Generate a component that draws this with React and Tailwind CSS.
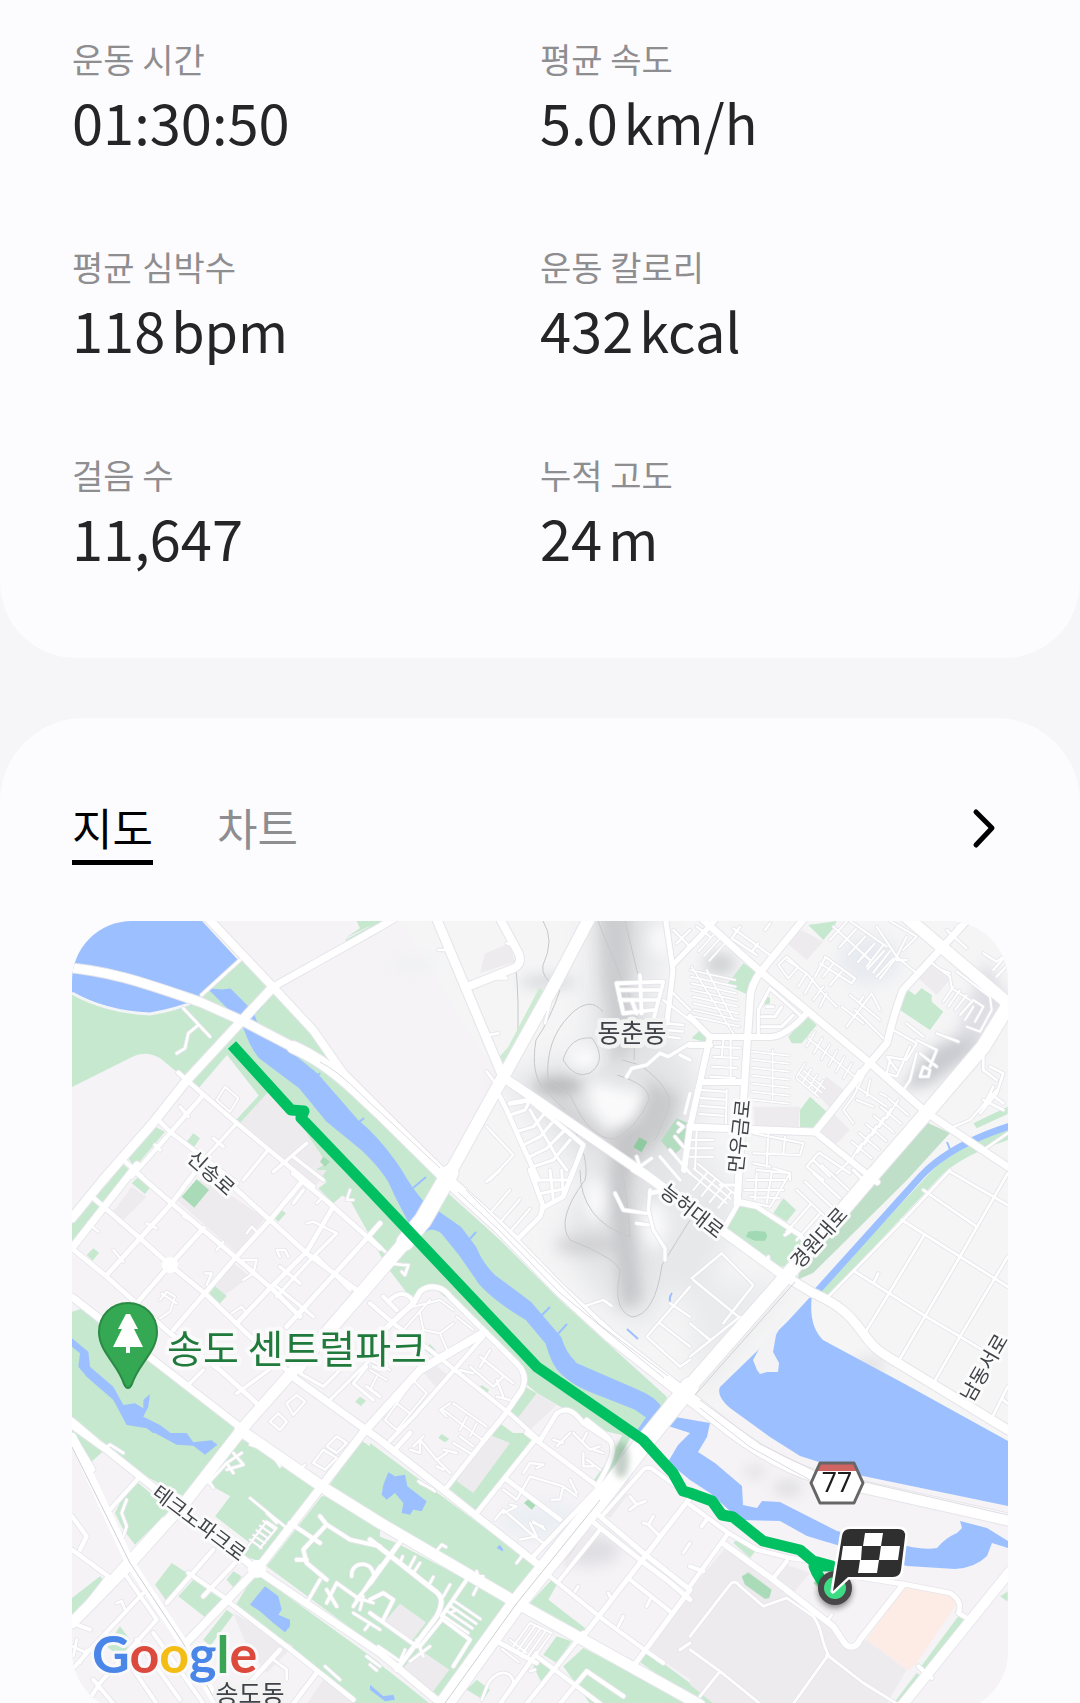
import React, { useState } from "react";

const STATS = [
  { label: "운동 시간", value: "01:30:50" },
  { label: "평균 속도", value: "5.0", unit: "km/h" },
  { label: "평균 심박수", value: "118", unit: "bpm" },
  { label: "운동 칼로리", value: "432", unit: "kcal" },
  { label: "걸음 수", value: "11,647" },
  { label: "누적 고도", value: "24", unit: "m" },
];

const TABS = [
  { id: "map", label: "지도" },
  { id: "chart", label: "차트" },
];

// n parallel segments, each (dx, dy) long and shifted by (sx, sy)
const hatch = (x, y, dx, dy, sx, sy, n) =>
  Array.from({ length: n }, (_, i) => `M${x + sx * i} ${y + sy * i}l${dx} ${dy}`).join("");

const GREEN = "#c5e8cf";
const DEEP_GREEN = "#aadbb8";
const WATER = "#9cc0ff";
const GRAY = "#eeebee";

// The map is split in sectors drawn at three times the map scale.
// roads: [stroke width, path]
const SECTORS = [
  {
    x: 60,
    y: 910,
    areas: [
      [GRAY, "M535 635 620 545 700 610 800 760 730 800z"],
      [GREEN, "M378 698 400 670 420 685 402 712zM205 745 285 650 315 665 225 772zM140 810 185 760 215 785 200 810zM800 810 840 760 890 810zM855 85 960 33 890 33 900 55zM960 33 855 90 865 96 960 50z"],
      [GREEN, "M528 630 615 536 625 545 540 638z"],
      [DEEP_GREEN, "M780 755 790 740 810 755 795 770z"],
    ],
    roads: [
      [8, "M370 295 450 380M415 345 385 370 375 415 350 430"],
      [13, "M355 488 420 545 525 635 760 830M430 555 325 675 215 800M295 630 330 665 440 750 530 820M185 745 245 800"],
      [10, "M530 640 430 750M620 725 550 810M740 700 640 785M700 740 790 810M385 620 360 590M300 720 285 705M460 685 490 710"],
      [6, "M470 570 495 530 535 565 510 605 470 570"],
      [9, "M425 255 540 150"],
    ],
  },
  {
    x: 370,
    y: 910,
    areas: [
      [GRAY, "M345 130 420 100 435 155 330 190z"],
      ["#cdebd2", "M385 445 400 460 500 320 530 250 508 233 415 410z"],
      [GREEN, "M210 50 216 50 270 160 262 160zM300 240 306 240 390 440 380 430zM0 33 60 33 0 60z"],
      ["#8fc9a0", "M790 712 808 682 832 695 815 726z"],
      ["#b3dcc0", "M873 692 920 625 955 640 950 700 910 737z"],
    ],
    roads: [
      [11, "M740 220 880 215 850 330 M740 220 760 310 850 300M745 240 875 240M750 270 865 270M810 195 815 310M785 270 800 310"],
      [10, "M770 500 785 475 830 465 870 430M870 430 895 440 960 400M930 435 960 450"],
      [8, "M350 485 380 525M355 375 385 370M205 120 225 120M370 205 410 205 395 195M410 100 425 105"],
      [14, "M390 560 410 600 450 690 505 810M420 580 480 570 640 705 600 810"],
      [9, "M480 570 465 600 420 615M480 600 560 740 590 780M440 665 490 650 520 615M460 705 510 680 545 640M480 740 530 715 580 665M490 770 550 750 600 690"],
      [7, "M350 650 430 735 360 810M295 230 350 375M525 340 540 280"],
      [9, "M915 680 940 710M925 640 940 650 925 665M800 740 810 770 845 745M870 740 930 810M900 720 960 790M945 610 960 550"],
      [7, "M910 60 960 110M920 100 960 60M880 270 960 330M900 240 960 300M890 340 940 345M890 360 940 365M890 380 930 385"],
    ],
  },
  {
    x: 690,
    y: 910,
    areas: [
      [GRAY, "M680 200 730 150 780 210 740 255zM370 540 410 500 470 545 420 595zM190 590 330 590 325 655 195 655zM380 655 430 610 480 660 430 710zM280 90 335 60 400 95 350 150z"],
      [GREEN, "M110 225 160 160 205 190 175 255zM355 45 440 33 430 55 400 90zM295 380 350 318 380 345 335 400 305 400zM330 600 360 560 410 605 370 658 330 655zM615 290 655 240 675 255 695 235 725 255 725 275 760 305 720 360zM5 385 30 360 60 380 55 400zM850 640 953 590 953 612 860 655zM222 265 240 262 240 280 225 285z"],
    ],
    roads: [
      [5, hatch(0, 180, 135, 30, 2, 20, 8) + "M5 170 130 370M50 180 130 330"],
      [5, hatch(10, 110, 45, -50, 16, 14, 4)],
      [5, hatch(375, 365, -25, 45, 22, 19, 7) + "M355 385 500 505"],
      [5, hatch(185, 425, 112, 12, 0, 24, 7) + "M248 420 248 570"],
      [5, hatch(345, 460, -25, 40, 18, 17, 4) + hatch(320, 505, 65, 55, 10, -12, 3)],
      [6, hatch(75, 410, 75, 4, -5, 30, 4) + "M122 390 122 520M100 390 95 440"],
      [6, hatch(35, 540, 72, 5, -2, 24, 4) + "M110 540 108 640"],
      [6, "M190 670 340 700 330 735 190 730M235 670 230 770M285 680 280 730M0 690 70 690M0 715 70 715M0 740 70 740M20 665 15 780M190 760 240 770M250 775 300 790 300 810"],
      [6, "M265 165 290 140 325 170 295 205zM290 150 350 190 400 250 440 290M325 230 350 190M345 250 370 205M370 270 400 230M390 290 410 250"],
      [6, "M405 140 495 205 485 220 390 160M375 200 405 145M400 200 430 160M420 225 455 185"],
      [6, hatch(420, 90, 50, -55, 28, 22, 6) + "M430 50 540 150M480 33 590 110"],
      [6, hatch(530, 170, 50, -65, 20, 18, 3) + "M560 50 620 140 650 80M600 33 680 80 640 120M620 140 680 190"],
      [7, "M150 50 125 85 200 135M130 55 240 135M185 125 205 100M20 50 60 80M225 60 240 40"],
      [9, "M205 380 205 300 240 235 335 320M215 320 255 320 275 290M215 350 275 350 310 315M230 290 250 290"],
      [6, "M455 290 520 340M480 255 570 330M470 350 545 250 570 300M495 300 580 385M510 275 520 260"],
      [6, "M720 155 780 200 785 235 840 270M800 185 900 260 905 300 870 365 830 350M760 275 790 230M775 290 810 240M795 300 830 255M810 315 850 270 880 290 855 335M825 330 850 290"],
      [7, "M610 360 680 400 650 450 590 440 620 480M650 340 700 380M680 390 740 420 720 470M680 430 660 510 640 540M700 470 690 500 715 500 720 480zM740 370 805 395M690 430 740 470M600 450 590 490 620 500 660 410"],
      [6, "M520 500 490 560 460 600 490 640M500 530 590 590M540 510 530 560M570 550 590 560M550 590 500 570"],
      [6, hatch(625, 570, -35, 55, -22, 26, 6) + hatch(655, 615, -60, -50, -22, 26, 6)],
      [7, "M770 60 830 115M800 50 830 33M880 130 920 155 953 130M910 180 945 140M920 200 953 165M755 180 780 190M620 150 650 150"],
      [8, "M880 440 880 480 920 510M900 470 940 490 920 550 870 610M880 570 940 600M900 550 940 580M910 530 880 590"],
      [7, "M780 655 840 630 920 540M880 720 953 670"],
      [7, "M385 730 350 770 400 810M370 750 420 800M390 730 480 790M440 790 480 750"],
    ],
  },
  {
    x: 60,
    y: 1170,
    areas: [
      [GRAY, "M350 90 430 20 615 145 530 250zM160 125 215 50 260 80 190 150zM465 345 520 280 570 320 495 375zM700 0 800 0 770 45z"],
      [GREEN, "M105 80 180 0 215 10 130 115zM36 155 90 90 125 115 36 215zM215 40 235 20 272 50 255 72zM640 140 658 115 678 130 655 155zM80 255 100 235 117 248 98 272zM445 375 465 348 500 378 478 403zM885 695 900 680 918 692 903 708zM775 55 850 0 890 40 820 100z"],
      [DEEP_GREEN, "M365 80 410 28 447 60 403 113z"],
      [GREEN, "M36 425 70 415 290 580 525 770 515 812 36 812z"],
      [WATER, "M36 505 85 545 90 590 160 650 190 705 225 700 250 715 250 690 270 672 265 710 250 740 300 765 340 795 375 812 310 812 260 775 200 765 160 690 80 620 55 590 60 550 36 530z"],
    ],
    roads: [
      [14, "M220 0 335 100 530 265 640 360 720 440M90 75 240 205 330 285 440 375 560 490 690 610M36 235 140 320 330 490 480 600 590 700M520 50 630 150 740 250 890 360M700 10 820 110 960 235"],
      [14, "M410 0 335 100 240 205 140 315M730 30 630 150 525 265 430 375 340 480M430 175 330 285 230 400M820 110 740 245 625 360 530 460M960 160 880 250 780 360 680 470"],
      [10, "M650 350 760 440M830 190 760 260 650 380M640 590 530 670M430 600 380 650M660 290 720 340M790 350 720 430M730 60 700 100M770 260 870 360"],
      [7, "M370 140 390 150M260 160 290 175M160 240 190 275M85 160 115 185M470 240 490 215M560 190 575 170 590 185M550 270 590 270 580 310 550 330M660 260 650 240 675 240 685 260M435 310 455 310 440 345"],
      [6, "M300 390 320 365 345 380 330 425 300 445M305 370 350 400M515 430 545 410 560 430 590 400"],
      [14, "M36 750 110 812"],
      [9, "M735 590 720 610 790 650 840 600M920 590 880 640 940 690M810 690 940 560M940 590 960 600M920 650 960 680"],
      [7, "M680 700 710 675 735 695 700 735zM630 755 655 730 680 755 660 780zM740 160 760 155 830 190M770 100 790 80M870 60 860 90 880 90"],
    ],
  },
  {
    x: 370,
    y: 1170,
    areas: [
      [GRAY, "M440 745 500 670 560 705 470 790zM145 590 165 560 240 620 205 660z"],
      [GREEN, "M165 540 180 522 197 540 182 555zM320 660 335 645 358 660 342 678zM370 780 390 760 460 812 370 812zM420 720 465 650 500 670 440 748z"],
    ],
    roads: [
      [14, "M480 0 520 110 510 140 440 210M515 115 580 80 610 0M790 0 890 60 840 70"],
      [9, "M505 30 600 30M515 70 590 55M540 0 550 90M575 0 580 80M350 35 390 0"],
      [7, hatch(355, 135, 65, -75, 30, 28, 3) + "M320 90 440 200"],
      [7, "M640 410 700 390 725 408M830 500 960 350M830 500 930 590 960 570M870 460 960 530M900 400 960 440"],
      [10, "M735 70 760 120 830 130M840 60 835 120 850 180 885 235 885 270M800 160 835 165"],
      [8, "M60 280 100 285 115 285 105 315 95 305M0 200 45 245"],
      [16, "M0 520 130 400 150 365C180 340 220 350 240 380L440 580C470 610 465 640 455 660L400 740 340 812"],
      [12, "M0 400 70 460 180 540 430 740 510 812M60 390C90 360 120 370 130 400"],
      [12, "M340 500 130 740 60 812M40 380 80 420"],
      [6, "M130 410 210 390 250 420M100 480 180 390M150 430 160 480 210 490 250 460 M210 490 240 560M260 440 310 480M90 470 150 520"],
      [7, "M300 590 370 650 400 620M330 560 380 600 430 640M360 540 330 590M380 680 420 690M270 600 310 610M380 630 400 680"],
      [6, "M45 750 130 630 170 670 80 780zM80 700 120 730M220 720 340 812M250 700 350 770M230 740 210 720 240 700M290 740 270 780M320 760 300 800M0 600 50 630M20 620 0 660M0 570 60 600"],
      [14, "M510 812 560 730C590 710 610 720 640 760L720 812M650 750 700 790"],
    ],
  },
  {
    x: 690,
    y: 1170,
    areas: [
      [GREEN, "M145 105 210 115 345 210 300 290 270 290 105 175z"],
      [GREEN, "M250 130 280 85 318 120 290 155z"],
      ["#a0d9b3", "M175 185 195 182 225 185 232 198 225 212 195 212 168 200z"],
    ],
    roads: [
      [8, "M495 305 700 435 810 500 910 560M635 150 810 260 953 350M700 60 860 170M780 5 953 105M700 200 530 480M953 10 810 260 625 575M953 260 810 500 730 640M953 650 905 745M415 380 640 150 780 0M550 340 565 310M940 690 953 700"],
      [7, "M5 325 95 250 190 345 100 460M145 440 10 330M0 560 150 440M0 460 60 510"],
      [14, "M150 100 200 110 330 195 345 215M105 170 145 100"],
      [7, hatch(320, 60, 80, 75, 25, -25, 4) + hatch(290, 185, 70, -80, 30, 25, 3)],
      [6, "M150 10 150 90 240 110 300 10 200 0M170 30 290 30M165 60 280 60M200 10 195 90M245 10 230 100M180 80 270 85"],
      [6, hatch(0, 10, 110, 90, 12, -14, 3) + hatch(10, 60, 40, -50, 25, 18, 4)],
      [9, "M90 45 145 45M285 195 300 185M490 0 540 50M235 260 235 275"],
    ],
  },
  {
    x: 60,
    y: 1433,
    areas: [
      [GREEN, "M36 0 515 0 370 190 240 120 140 45 85 95z"],
      [WATER, "M285 0 350 35 400 38 435 65 472 35 455 22 400 28 380 0z"],
      [GREEN, "M540 20 600 30 770 160 680 275 600 385 550 370 570 330 465 250 510 190 440 150zM900 20 960 60 960 255 800 170z"],
      [GREEN, "M190 190 235 150 330 230 225 335 190 290 165 240zM335 390 390 425 320 505 285 455zM400 440 500 510 445 560 355 490zM500 440 520 415 545 430 522 465zM36 495 120 430 135 445 36 545zM430 620 500 530 520 545 450 640z"],
      [GREEN, "M580 430 600 430 960 690 960 812 880 812 525 520zM785 190 840 190 960 290 960 650 620 400z"],
      ["#f6f3f7", "M410 185 440 155 510 190 465 250 410 225z"],
      [GRAY, "M520 540 700 640 620 720 560 640zM740 812 790 740 880 812z"],
      [WATER, "M570 515 590 490 615 460 655 490 665 530 655 545 690 560 690 580 675 598 640 570 600 535z"],
      [GREEN, "M140 640 180 580 210 620 190 680z"],
    ],
    roads: [
      [13, "M240 130 150 230M40 10 100 110M310 260 210 370 60 540M460 350 320 510M530 385 430 490M385 420 510 505M36 350 145 430 36 570M36 250 80 310 60 350"],
      [12, "M250 480 90 650 36 710M290 560 120 750 80 812M200 430 290 560M200 680 290 812M280 600 430 812M100 740 160 812M36 570 90 590M230 620 360 800"],
      [14, "M510 510 680 640 880 800M660 650 560 760M770 720 700 812"],
      [8, "M200 200 185 240 200 280 190 310M130 50 150 35 190 60M170 510 185 505 195 530M36 640 80 660M50 620 40 670M60 690 80 650"],
      [12, "M690 270 780 330M780 250 800 275 730 350 740 390 800 440M800 275 870 320 960 340M710 380 740 380"],
      [10, "M875 430C870 380 950 380 940 440L890 500M780 440 740 510M800 510 830 450 900 500M960 400 880 520M800 470 830 520"],
      [7, "M570 195 680 285M620 240 650 270 M760 90 790 50 830 75 795 110zM800 40 830 10 860 30 830 60zM570 35 600 45M640 70 660 100M720 110 735 95"],
      [8, "M445 150 500 90 545 60M500 90 520 120M520 60 550 95 500 110M450 150 460 165"],
      [5, hatch(570, 320, 35, 25, 10, -14, 5) + "M560 345 620 265 650 285M600 345 650 285"],
      [8, "M795 700 840 740M910 490 900 530M910 500 940 510M880 540 960 590M930 570 915 590M920 670 960 700M640 680 680 710 680 740"],
    ],
  },
  {
    x: 370,
    y: 1433,
    areas: [
      [GREEN, "M0 30 500 400 430 510 0 260zM235 165 370 0 490 0 500 10 320 235z"],
      [GRAY, "M260 145 345 0 420 30 310 180z"],
      [GREEN, "M0 300 80 330 440 520 200 800 190 790 0 650zM0 670 180 812 0 812z"],
      [GRAY, "M45 565 90 512 168 568 120 630zM85 720 150 650 238 710 180 788zM960 480 960 740 830 650zM580 400 650 290 680 290 610 400zM690 240 780 130 770 190 720 255z"],
      [GREEN, "M480 510 545 440 560 455 535 500 645 585 640 605zM520 665 560 610 605 625 560 690zM800 680 830 655 960 750 960 795zM580 700 640 645 960 812 660 812zM290 770 320 740 360 770 340 800zM490 700 515 670 550 700 515 750zM665 150 730 60 760 0 790 0 700 155zM205 15 215 3 238 18 225 28z"],
      [DEEP_GREEN, "M462 210 475 198 498 215 485 230z"],
      [WATER, "M55 118 75 130 105 125 112 160 170 205 155 235 130 230 120 245 95 240 100 210 75 180 50 200 35 185 40 155zM380 345 390 335 400 350 397 355zM0 755 40 790 70 785 75 800 45 805 0 770z"],
    ],
    roads: [
      [14, "M470 0 690 165M410 140 570 260M500 15 320 240M225 170 360 0M75 50 120 0M490 370 690 160"],
      [12, "M540 430 700 560 830 655 880 690M570 440 690 290M780 440 900 535M700 245 820 110C830 100 845 105 850 110L960 190"],
      [15, "M690 250 820 360 960 470M660 260 810 380 890 440 960 500M960 195 640 610M960 470 790 700"],
      [14, "M700 0C740 30 740 60 680 160M0 320 190 470C220 490 220 510 200 550L80 710M95 320 0 450"],
      [11, "M290 440 215 550M220 560 300 620 250 700M0 540 140 640M150 640 215 560M0 500 40 480 70 500 40 560"],
      [7, hatch(215, 545, 80, 55, 12, -14, 4) + "M240 540 260 530"],
      [13, "M500 660 390 812M640 600 470 812M500 670 690 812M650 715 760 790M650 715 570 812M390 630 500 690"],
      [8, "M335 800 355 750C390 700 430 720 430 750L400 800M480 715 495 710"],
      [6, hatch(480, 570, -50, 70, 15, 9, 5) + hatch(420, 620, 50, 40, -12, 14, 3) + "M480 570 545 600"],
      [8, "M90 390 98 370M115 410 135 372M130 420 150 390M180 450 190 432M220 490 240 455M195 360 215 335 228 342M440 390 455 370M320 415 325 430 340 430M310 485 320 465M25 640 90 685 105 650M120 685 180 640M140 620 160 670M0 695 20 712"],
      [7, "M460 120 480 90 520 95 500 105M480 130 580 160 620 190M480 130 440 200 400 170M545 200 570 200 580 160M600 140 620 180M420 215 440 220M400 230 375 260M400 230 480 300 520 330M440 220 400 240M490 270 520 280M450 320 500 310 480 270M490 265 525 290"],
      [7, "M120 50 150 60 150 20 200 80 230 60M130 40 160 10M200 80 240 120M220 50 260 60M200 100 220 110M250 30 300 60M270 10 310 40M150 150 190 170M145 145 195 175"],
      [7, "M560 40 600 0M550 20 580 30M610 0 660 50 690 40M640 60 640 100 670 100M650 80 690 110M670 50 700 60M640 20 650 0"],
      [9, "M780 190 800 215 780 230M800 215 825 205M850 250 835 275 820 270M835 275 870 310M960 330 940 360M720 490 715 480M830 520 840 500M745 580 760 550M615 475 625 460M930 650 960 630"],
    ],
  },
  {
    x: 690,
    y: 1433,
    areas: [
      [GRAY, "M110 340 250 435 290 395 360 420 310 480 430 580 480 640 530 620 650 710 590 812 0 812 0 470z"],
      ["#fdebe6", "M640 458 780 485 802 510 680 690 655 712 530 620z"],
      [GREEN, "M130 330 145 315 195 355 180 375zM690 705 810 543 833 560 715 720zM610 812 680 720 700 735 645 812zM0 755 70 812 0 812zM930 490 953 475 953 505z"],
      [DEEP_GREEN, "M155 430 175 418 245 470 238 495 225 498 165 455zM370 450 380 440 395 455 385 465z"],
      ["#f6f3f7", "M0 370 0 470 105 340 40 290z"],
    ],
    roads: [
      [13, "M0 215 115 300 200 350 300 375 380 385M115 300 0 460M290 385 250 435"],
      [18, "M105 335 250 440 430 580 460 625C475 650 500 645 510 620L640 455"],
      [14, "M490 430 650 455 780 480C810 500 815 520 805 540L840 560"],
      [8, "M0 610 120 455C130 440 145 450 150 460L220 520 290 495 370 550C400 590 390 620 415 665L310 812M410 665 520 750 620 812M0 650 90 715 210 812M90 715 30 790M415 560 425 545"],
      [12, "M685 700 725 735M0 400 40 415"],
      [12, "M35 280 50 260"],
      [30, "M960 415 630 825"],
    ],
  },
];

// Main streets in map coordinates
const MAIN_ROADS = [
  [8, "M205 915 273 987 313 1030 343 1073 380 1110"],
  [7, "M273 987 380 927 400 915"],
  [9, "M273 987 187 1080 153 1123 103 1180 72 1218"],
  [7, "M137 1165 72 1248"],
  [12, "M591 915 557 980 503 1077 450 1173"],
  [17, "M450 1173 423 1220 405 1242"],
  [13, "M405 1242 370 1283 310 1352"],
  [11, "M310 1352 247 1423 187 1500 127 1567 72 1623"],
  [9, "M503 1077 643 1173 783 1275 813 1293C840 1305 850 1315 863 1333S880 1352 903 1366L1008 1430"],
  [9, "M435 915 503 1077"],
  [8, "M498 915 518 952Q524 964 512 969L467 987"],
  [14, "M1010 1003 983 1047 923 1117 877 1170 783 1280 690 1386"],
  [18, "M690 1386 643 1444 603 1496 517 1603 440 1710"],
  [12, "M904 915 1010 1005"],
  [7, "M700 917 762 973 870 1063 927 1113 1008 1167"],
  [7, "M807 915 762 970Q750 985 750 1000L745 1077 737 1203"],
  [7, "M972 915 903 990Q895 1010 887 1043L870 1063 815 1132 690 1127"],
  [6, "M815 1132 877 1182"],
  [6, "M690 1017 710 1037H770Q785 1037 807 1013M710 1037 690 1127 684 1170M702 1082H742M690 1045H710"],
  [5, "M665 915 673 970 667 1023M673 965 720 915"],
  [7, "M72 1297 240 1427"],
  [7, "M72 1425 107 1450 257 1570 380 1653 440 1703"],
  [11, "M240 1430 327 1490 380 1523 517 1603 700 1705"],
  [8, "M363 1433 260 1566 183 1646"],
  [7, "M293 1377 380 1440 540 1566"],
  [8, "M363 1433 420 1370 480 1335"],
];

const HIGHWAY_WEST = "M60 967C110 970 150 985 200 1002L247 1023 293 1047";

const HIGHWAY =
  "M293 1047C330 1063 355 1090 380 1113L455 1187 500 1228 560 1290 610 1336 670 1383 692 1400 730 1430C770 1460 810 1480 863 1487L1010 1520";

const ROUTE =
  "M232 1045 291 1110 304 1111 301 1118 370 1190 537 1367 643 1440 673 1473 683 1491 690 1493 712 1501 722 1515 733 1517 763 1541 800 1550 813 1561 832 1566 814 1566 817 1573 823 1583";

function SectorLayer({ children }) {
  return SECTORS.map((s) => (
    <g key={`${s.x}-${s.y}`} transform={`translate(${s.x} ${s.y}) scale(0.33333)`}>
      {children(s)}
    </g>
  ));
}

function RoadName({ x, y, angle, children }) {
  return (
    <text
      x={x}
      y={y}
      transform={`rotate(${angle} ${x} ${y})`}
      textAnchor="middle"
      dominantBaseline="central"
      fontSize="20"
      fill="#3f4347"
      stroke="#fbfbfc"
      strokeWidth="6"
      strokeLinejoin="round"
      paintOrder="stroke"
    >
      {children}
    </text>
  );
}

function Terrain() {
  return (
    <g>
      <g filter="url(#wide)">
        <path d="M590 900 660 900 650 1010 700 1080 690 1150 670 1220 650 1330 600 1300 560 1240 590 1180 530 1110 500 1080 590 1050z" fill="#e3e4e6" />
        <path d="M690 1290 790 1280 740 1340 700 1400z" fill="#e9eaeb" />
        <path d="M700 1140 740 1210 700 1300 660 1290z" fill="#e6e7e9" />
      </g>
      <g filter="url(#soft)">
        <path d="M598 900 632 900 630 990 640 1040 614 1066 602 980z" fill="#c4c5c8" opacity="0.75" />
        <path d="M612 1130 640 1100 630 1200 642 1300 622 1310 610 1200z" fill="#bdbec1" opacity="0.75" />
        <ellipse cx="558" cy="1086" rx="24" ry="9" fill="#a9a9ac" opacity="0.75" />
        <ellipse cx="548" cy="982" rx="28" ry="6" fill="#d3d6d8" />
        <path d="M648 1080 680 1095 670 1130 635 1165 612 1175 628 1130z" fill="#c4c5c7" opacity="0.85" />
        <ellipse cx="590" cy="1245" rx="34" ry="9" fill="#cccdd0" opacity="0.85" />
        <path d="M560 1095 620 1140 605 1150 550 1112z" fill="#d2d2d5" />
        <path d="M930 1050 970 1030 985 1045 930 1085 900 1090z" fill="#c4c5cb" opacity="0.9" />
        <path d="M985 960 1008 1000 975 1050 955 1040z" fill="#d7d7de" opacity="0.8" />
        <ellipse cx="720" cy="964" rx="16" ry="11" fill="#cfd0d4" />
        <ellipse cx="590" cy="1550" rx="30" ry="16" fill="#dadadd" opacity="0.8" />
        <ellipse cx="755" cy="1472" rx="10" ry="5" fill="#d9dadb" />
        <ellipse cx="788" cy="1488" rx="14" ry="7" fill="#d9dadb" />
        <ellipse cx="870" cy="1365" rx="16" ry="7" fill="#dfdfe3" />
        <ellipse cx="540" cy="1520" rx="40" ry="20" fill="#ebeff3" />
        <ellipse cx="410" cy="965" rx="24" ry="8" fill="#eff1f3" />
        <ellipse cx="870" cy="960" rx="30" ry="24" fill="#e7eaf0" />
      </g>
      <g filter="url(#soft)" fill="#fafafb">
        <path d="M590 1080 625 1090 645 1090 635 1120 608 1130 590 1105z" />
        <ellipse cx="584" cy="1058" rx="16" ry="12" />
        <ellipse cx="660" cy="940" rx="10" ry="14" />
        <ellipse cx="655" cy="1225" rx="12" ry="24" />
        <ellipse cx="595" cy="1200" rx="10" ry="22" />
      </g>
      <g fill="none" stroke="#c6c7c9" strokeWidth="1">
        <path d="M543 921Q555 940 543 965 540 978 560 990 550 1020 536 1040 530 1075 545 1090L565 1110M515 960Q520 1000 517 1050M598 921 620 975 636 1010 634 1060M625 921 638 975" />
        <path d="M548 1080Q545 1040 570 1015 590 995 603 1012M563 1060Q570 1036 592 1038 608 1060 590 1073 575 1080 563 1060M617 1075Q650 1085 649 1100 635 1130 615 1139 590 1140 570 1095L548 1080M622 1060 640 1065Q675 1090 668 1110L655 1140" />
        <path d="M572 1125Q590 1160 585 1180 555 1220 570 1240 620 1260 620 1272 612 1310 632 1317 655 1315 662 1265L690 1220M580 1170Q580 1220 630 1237 627 1190 622 1172" />
      </g>
    </g>
  );
}

function RouteMap() {
  return (
    <svg
      viewBox="72 921 936 791"
      className="block h-auto w-full rounded-[60px] font-['Noto_Sans_CJK_KR',sans-serif]"
      role="img"
      aria-label="지도"
    >
      <defs>
        <filter id="soft" x="-50%" y="-50%" width="200%" height="200%">
          <feGaussianBlur stdDeviation="7" />
        </filter>
        <filter id="wide" x="-50%" y="-50%" width="200%" height="200%">
          <feGaussianBlur stdDeviation="14" />
        </filter>
        <filter id="drop" x="-50%" y="-50%" width="200%" height="200%">
          <feGaussianBlur stdDeviation="3" />
        </filter>
      </defs>

      <rect x="72" y="921" width="936" height="791" fill="#f6f3f7" />
      <path d="M400 921H1008V1500L690 1400 450 1180 500 1080z" fill="#f5f5f6" />
      <Terrain />

      {/* coast and green belt along the canal */}
      <path
        d="M72 993 150 1014 190 1005 243 960 273 990 327 1053 380 1120 443 1177 450 1195 500 1240 560 1300 667 1397 660 1417 643 1440 600 1430 537 1393 525 1383 521 1370 457 1307 433 1287 410 1297 387 1267 350 1200 333 1190 227 1055 197 1090 183 1077 160 1058Q145 1050 132 1057L72 1087z"
        fill={GREEN}
      />
      <path d="M72 921H202L238 960 192 1005Q150 1020 110 1009L72 993z" fill={WATER} />
      <path d="M72 993Q105 1012 150 1014 175 1010 200 1000" fill="none" stroke="#f3f4f6" strokeWidth="3" />
      <path
        d="M211 990 243 1022Q250 1045 260 1057L300 1087Q315 1105 327 1120L360 1147Q380 1165 390 1182L397 1197 410 1222 417 1235 430 1228Q438 1228 443 1233L460 1254 480 1283Q495 1300 527 1319L547 1343Q553 1365 563 1374 575 1385 597 1393L635 1408 648 1417 637 1433 643 1436 662 1410Q655 1398 637 1391L577 1365Q565 1355 560 1338L530 1303Q510 1288 495 1277 482 1265 475 1248L460 1228 437 1212 423 1203Q410 1188 400 1170 380 1140 357 1121L317 1075 275 1041Q255 1030 253 1013L230 990 222 991z"
        fill={WATER}
        stroke={WATER}
        strokeWidth="3"
        strokeLinejoin="round"
      />
      <path
        d="M413 1188 426 1177M468 1241 476 1232M541 1316 550 1307M557 1335 567 1324M316 1078 320 1073M357 1124 364 1118M255 1013 262 1006"
        stroke={WATER}
        strokeWidth="2"
      />
      <path
        d="M658 1414 710 1423 707 1437 698 1452 715 1463 742 1486 743 1505 757 1508 762 1501 780 1502 837 1531 907 1546Q925 1550 937 1548 945 1538 957 1533L962 1528 960 1521 987 1528 1008 1541V1548L992 1543 987 1556Q975 1568 955 1569L907 1566 837 1545 807 1536 780 1521 740 1520 710 1493 690 1480 668 1462 678 1445 690 1433 665 1425z"
        fill={WATER}
      />
      <path
        d="M812 1295 787 1322 720 1387Q716 1396 730 1408L770 1437 800 1456 863 1476 1008 1506V1441L903 1383 823 1340Q808 1325 812 1295z"
        fill={WATER}
      />
      <path d="M782 1316 765 1338 753 1360 757 1370 760 1374 767 1372 778 1372 779 1363 773 1352 776 1335 785 1318z" fill="#f3f3f5" />
      <path d="M928 1123 950 1133 907 1180 813 1273 797 1280 803 1262 883 1173z" fill="#bfdfc8" />
      <path d="M823 1294 934 1176Q955 1152 1010 1134" fill="none" stroke={GREEN} strokeWidth="10" />
      <path d="M812 1297 921 1176Q950 1145 1010 1126" fill="none" stroke={WATER} strokeWidth="7" />
      <path d="M951 1152 947 1142M672 1293Q668 1298 671 1305M627 1329 638 1339" fill="none" stroke={WATER} strokeWidth="2" />

      <SectorLayer>{(s) => s.areas.map(([fill, d]) => <path key={d} d={d} fill={fill} />)}</SectorLayer>

      {/* casings first, so that the crossings stay open */}
      <g fill="none" stroke="#e5e5ea" strokeLinejoin="round" strokeLinecap="round">
        <SectorLayer>{(s) => s.roads.map(([w, d]) => <path key={d} d={d} strokeWidth={w + 5} />)}</SectorLayer>
        {MAIN_ROADS.map(([w, d]) => (
          <path key={d} d={d} strokeWidth={w + 2} />
        ))}
        <path d={HIGHWAY} strokeWidth="14" />
        <path d={HIGHWAY_WEST} strokeWidth="11" />
      </g>
      <g fill="none" stroke="#ffffff" strokeLinejoin="round" strokeLinecap="round">
        <SectorLayer>{(s) => s.roads.map(([w, d]) => <path key={d} d={d} strokeWidth={w} />)}</SectorLayer>
        {MAIN_ROADS.map(([w, d]) => (
          <path key={d} d={d} strokeWidth={w} />
        ))}
        <path d={HIGHWAY} strokeWidth="12" />
        <path d={HIGHWAY_WEST} strokeWidth="9" />
        <path d="M72 1437 130 1563 183 1643 222 1712" strokeWidth="9" />
      </g>
      <circle cx="170" cy="1265" r="8" fill="#fff" />
      <circle cx="257" cy="1569" r="9" fill="#fff" />
      <path
        d="M320 1062C345 1075 360 1095 380 1112L440 1168M458 1192 500 1231 560 1293 664 1378M700 1400 760 1444 815 1471 865 1482 1008 1515M700 1408 750 1447 810 1480M466 1190 600 1325 668 1376"
        fill="none"
        stroke="#dcdce2"
        strokeWidth="1"
      />
      <path d="M72 1447 130 1563 183 1643 222 1712M600 1500 517 1603 445 1703M795 1282 695 1395" fill="none" stroke="#cfd0d4" strokeWidth="1" />
      <ellipse cx="621" cy="1460" rx="8" ry="18" fill="#6f8a78" opacity="0.4" filter="url(#drop)" />

      <RoadName x={212} y={1172} angle={42}>신송로</RoadName>
      <RoadName x={738} y={1136} angle={-84}>먼우금로</RoadName>
      <RoadName x={693} y={1210} angle={38}>능허대로</RoadName>
      <RoadName x={818} y={1237} angle={-48}>경원대로</RoadName>
      <RoadName x={983} y={1367} angle={-60}>남동서로</RoadName>
      <RoadName x={200} y={1522} angle={37}>테크노파크로</RoadName>

      <g textAnchor="middle" fontSize="25" fill="#3f4347" stroke="#f3f3f4" strokeWidth="8" strokeLinejoin="round" paintOrder="stroke">
        <text x="632" y="1042">동춘동</text>
        <text x="250" y="1703">송도동</text>
      </g>

      {/* park pin */}
      <path
        d="M128 1303C145 1303 157 1316 157 1332 157 1352 138 1364 132 1384Q128 1392 124 1384C118 1364 99 1352 99 1332 99 1316 111 1303 128 1303z"
        fill="#34a853"
        stroke="#2b8a45"
        strokeWidth="2"
      />
      <path d="M126 1314H130L138 1329H134L143 1347H130V1353H126V1347H113L122 1329H118z" fill="#fff" />
      <text x="167" y="1363" fontSize="39" fill="#1f7a3c" stroke="#fafafa" strokeWidth="8" strokeLinejoin="round" paintOrder="stroke">
        송도 센트럴파크
      </text>

      <path d={ROUTE} fill="none" stroke="#00c062" strokeWidth="11" strokeLinejoin="round" />

      {/* road 77 shield */}
      <path d="M820 1462H854L863 1483 854 1503H820L811 1483z" fill="#fff" />
      <path d="M820 1462H854L858 1471H816z" fill="#cf6463" />
      <path d="M820 1463H854L863 1483 854 1503H820L811 1483z" fill="none" stroke="#666" strokeWidth="3" strokeLinejoin="round" />
      <text x="837" y="1492" fontSize="27" textAnchor="middle" fill="#1c1c1c" className="font-[Roboto,sans-serif]">
        77
      </text>

      {/* finish */}
      <circle cx="835" cy="1591" r="17" fill="#000" opacity="0.45" filter="url(#drop)" />
      <circle cx="835" cy="1588" r="14" fill="#3ddc84" stroke="#484848" strokeWidth="6" />
      <path
        d="M833 1591 842 1536Q843 1529 850 1529H898Q906 1529 905 1537L901 1570Q900 1577 893 1577H848z"
        fill="#fff"
        stroke="#fff"
        strokeWidth="5"
        strokeLinejoin="round"
      />
      <path d="M833 1591 842 1536Q843 1529 850 1529H898Q906 1529 905 1537L901 1570Q900 1577 893 1577H848z" fill="#2f2f2f" />
      <path d="M865 1533H883L881 1546H863zM843 1546H862L861 1560H841zM881 1546H900L898 1560H879zM860 1560H879L877 1573H858z" fill="#fff" />

      <text
        x="92"
        y="1673"
        fontSize="52"
        fontWeight="700"
        stroke="#f9f9fb"
        strokeWidth="6"
        strokeLinejoin="round"
        paintOrder="stroke"
        className="font-[Lato,sans-serif]"
      >
        <tspan fill="#4a86e8">G</tspan>
        <tspan fill="#dc4a3d">o</tspan>
        <tspan fill="#f4bd16">o</tspan>
        <tspan fill="#4a86e8">g</tspan>
        <tspan fill="#3aa655">l</tspan>
        <tspan fill="#dc4a3d">e</tspan>
      </text>
    </svg>
  );
}

export default function App() {
  const [tab, setTab] = useState("map");

  return (
    <main className="h-screen overflow-hidden bg-[#f6f6f8] font-['Noto_Sans_CJK_KR',sans-serif]">
      <section className="rounded-b-[76px] bg-[#fcfcff] px-[72px] pt-[39px] pb-[89px]">
        <dl className="grid grid-cols-2 gap-y-[94px]">
          {STATS.map((s) => (
            <div key={s.label} className="flex flex-col gap-2.5">
              <dt className="text-[34px] leading-10 text-[#8e8e90]">{s.label}</dt>
              <dd className="flex items-baseline gap-1.5 text-[56px] leading-16 text-[#252528]">
                <span>{s.value}</span>
                {s.unit && <span className="text-[54px] leading-none">{s.unit}</span>}
              </dd>
            </div>
          ))}
        </dl>
      </section>

      <section className="mt-[60px] rounded-t-[84px] bg-[#fcfcff] px-[72px] pt-[79px] pb-24">
        <div className="flex items-center justify-between">
          <div className="flex gap-16" role="tablist">
            {TABS.map((t) => (
              <button
                key={t.id}
                type="button"
                role="tab"
                aria-selected={tab === t.id}
                onClick={() => setTab(t.id)}
                className={
                  tab === t.id
                    ? "border-b-5 border-black pb-[3px] text-[44px] leading-[60px] text-black"
                    : "border-b-5 border-transparent pb-[3px] text-[44px] leading-[60px] text-[#8e8e90]"
                }
              >
                {t.label}
              </button>
            ))}
          </div>
          <button type="button" aria-label="자세히 보기" className="flex size-12 items-center justify-center">
            <svg viewBox="0 0 48 48" className="size-12" fill="none" stroke="#000" strokeWidth="5" strokeLinecap="round" strokeLinejoin="round">
              <path d="M16 5 32 21 16 38" />
            </svg>
          </button>
        </div>

        <div className="mt-14">
          <RouteMap />
        </div>
      </section>
    </main>
  );
}
